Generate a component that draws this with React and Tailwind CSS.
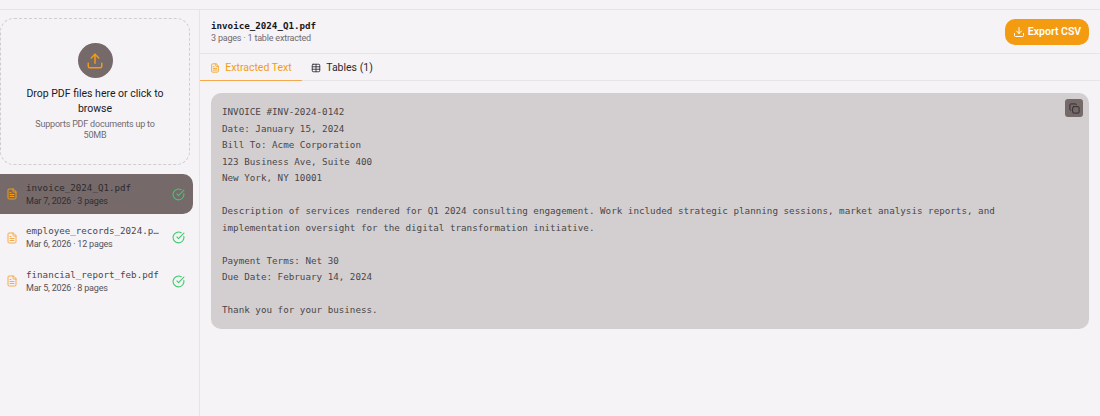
import { Upload, Download, FileText, Table, Copy, CircleCheckBig } from 'lucide-react';

const files = [
  { name: 'invoice_2024_Q1.pdf', meta: 'Mar 7, 2026 · 3 pages', active: true },
  { name: 'employee_records_2024.pdf', meta: 'Mar 6, 2026 · 12 pages' },
  { name: 'financial_report_feb.pdf', meta: 'Mar 5, 2026 · 8 pages' },
];

const lines = `INVOICE #INV-2024-0142
Date: January 15, 2024
Bill To: Acme Corporation
123 Business Ave, Suite 400
New York, NY 10001

Description of services rendered for Q1 2024 consulting engagement. Work included strategic planning sessions, market analysis reports, and
implementation oversight for the digital transformation initiative.

Payment Terms: Net 30
Due Date: February 14, 2024

Thank you for your business.`;

const mono = "font-['DejaVu_Sans_Mono',monospace]";

const App = () => {
  return (
    <div className="h-[416px] w-[1100px] overflow-hidden bg-[#f5f3f6] font-['Roboto',sans-serif] text-[#1a1a1f] flex flex-col">
      <div className="h-[10px] shrink-0 border-b border-[#e6e4e7]" />
      <div className="flex flex-1 min-h-0">
        {/* Sidebar */}
        <aside className="w-[200px] shrink-0 border-r border-[#e6e4e7] pt-2">
          <div className="w-[190px] h-[147px] rounded-[14px] border border-dashed border-[#cfcdd1] flex flex-col items-center pt-6 px-[24px]">
            <div className="w-[35px] h-[35px] rounded-full bg-[#75696a] flex items-center justify-center">
              <Upload className="w-[18px] h-[18px] text-[#f39c12]" strokeWidth={2} />
            </div>
            <p className="mt-[8px] text-[10.5px] leading-[15px] font-normal text-center">Drop PDF files here or click to browse</p>
            <p className="mt-[3px] text-[9px] tracking-[-0.2px] leading-[11px] text-[#6f6b72] text-center">Supports PDF documents up to 50MB</p>
          </div>

          <div className="mt-[9px] w-[193px] flex flex-col gap-[3.5px]">
            {files.map((f) => (
              <div
                key={f.name}
                className={`h-[40px] flex items-center pl-[6px] pr-[8px] rounded-r-[10px] ${f.active ? 'bg-[#75696a]' : ''}`}
              >
                <FileText className={`w-[12px] h-[12px] shrink-0 ${f.active ? 'text-[#f39c12]' : 'text-[#f5a94d]'}`} strokeWidth={2} />
                <div className="ml-[8px] w-[134px] min-w-0">
                  <div className={`${mono} text-[9.2px] leading-[14px] truncate ${f.active ? 'text-[#2f2a2c]' : 'text-[#4a4650]'}`}>{f.name}</div>
                  <div className={`text-[9px] tracking-[-0.2px] leading-[13px] ${f.active ? 'text-[#322e30]' : 'text-[#55525a]'}`}>{f.meta}</div>
                </div>
                <CircleCheckBig className="ml-[12px] w-[13px] h-[13px] shrink-0 text-[#3fc96f]" strokeWidth={2} />
              </div>
            ))}
          </div>
        </aside>

        {/* Main */}
        <main className="flex-1 min-w-0 flex flex-col">
          <header className="h-[44px] shrink-0 border-b border-[#e6e4e7] flex items-center justify-between pl-[11px] pr-[11px]">
            <div>
              <div className={`${mono} text-[9.2px] leading-[13px] font-bold text-[#17171b]`}>invoice_2024_Q1.pdf</div>
              <div className="text-[9px] tracking-[-0.2px] leading-[13px] text-[#6f6b72]">3 pages · 1 table extracted</div>
            </div>
            <button className="h-[26px] w-[84px] rounded-[10px] bg-[#f39c12] text-white flex items-center justify-center gap-[3px] text-[10.5px] font-semibold">
              <Download className="w-[12px] h-[12px]" strokeWidth={2} />
              Export CSV
            </button>
          </header>

          <div className="h-[27px] shrink-0 border-b border-[#e6e4e7] flex">
            <div className="w-[102px] h-[27px] pt-px flex items-center justify-center gap-[5px] border-b border-[#f5a94d] text-[#f39c12] text-[10.5px] font-normal">
              <FileText className="w-[10px] h-[10px]" strokeWidth={2} />
              Extracted Text
            </div>
            <div className="w-[80px] h-[27px] pt-px flex items-center justify-center gap-[5px] text-[#2a2a30] text-[10.5px] font-normal">
              <Table className="w-[10px] h-[10px]" strokeWidth={2} />
              Tables (1)
            </div>
          </div>

          <div className="py-3 pl-[11px] pr-[11px]">
            <div className="relative h-[236px] rounded-[10px] bg-[#d3cfd0] px-[11px] py-[11px]">
              <pre className={`${mono} text-[9.24px] leading-[16.5px] text-[#4a4648]`}>{lines}</pre>
              <button className="absolute top-[6px] right-[6px] w-[18px] h-[18px] rounded-[3px] bg-[#75696a] flex items-center justify-center">
                <Copy className="w-[11px] h-[11px] text-[#2f2a2c]" strokeWidth={2} />
              </button>
            </div>
          </div>
        </main>
      </div>
    </div>
  );
};

export default App;
